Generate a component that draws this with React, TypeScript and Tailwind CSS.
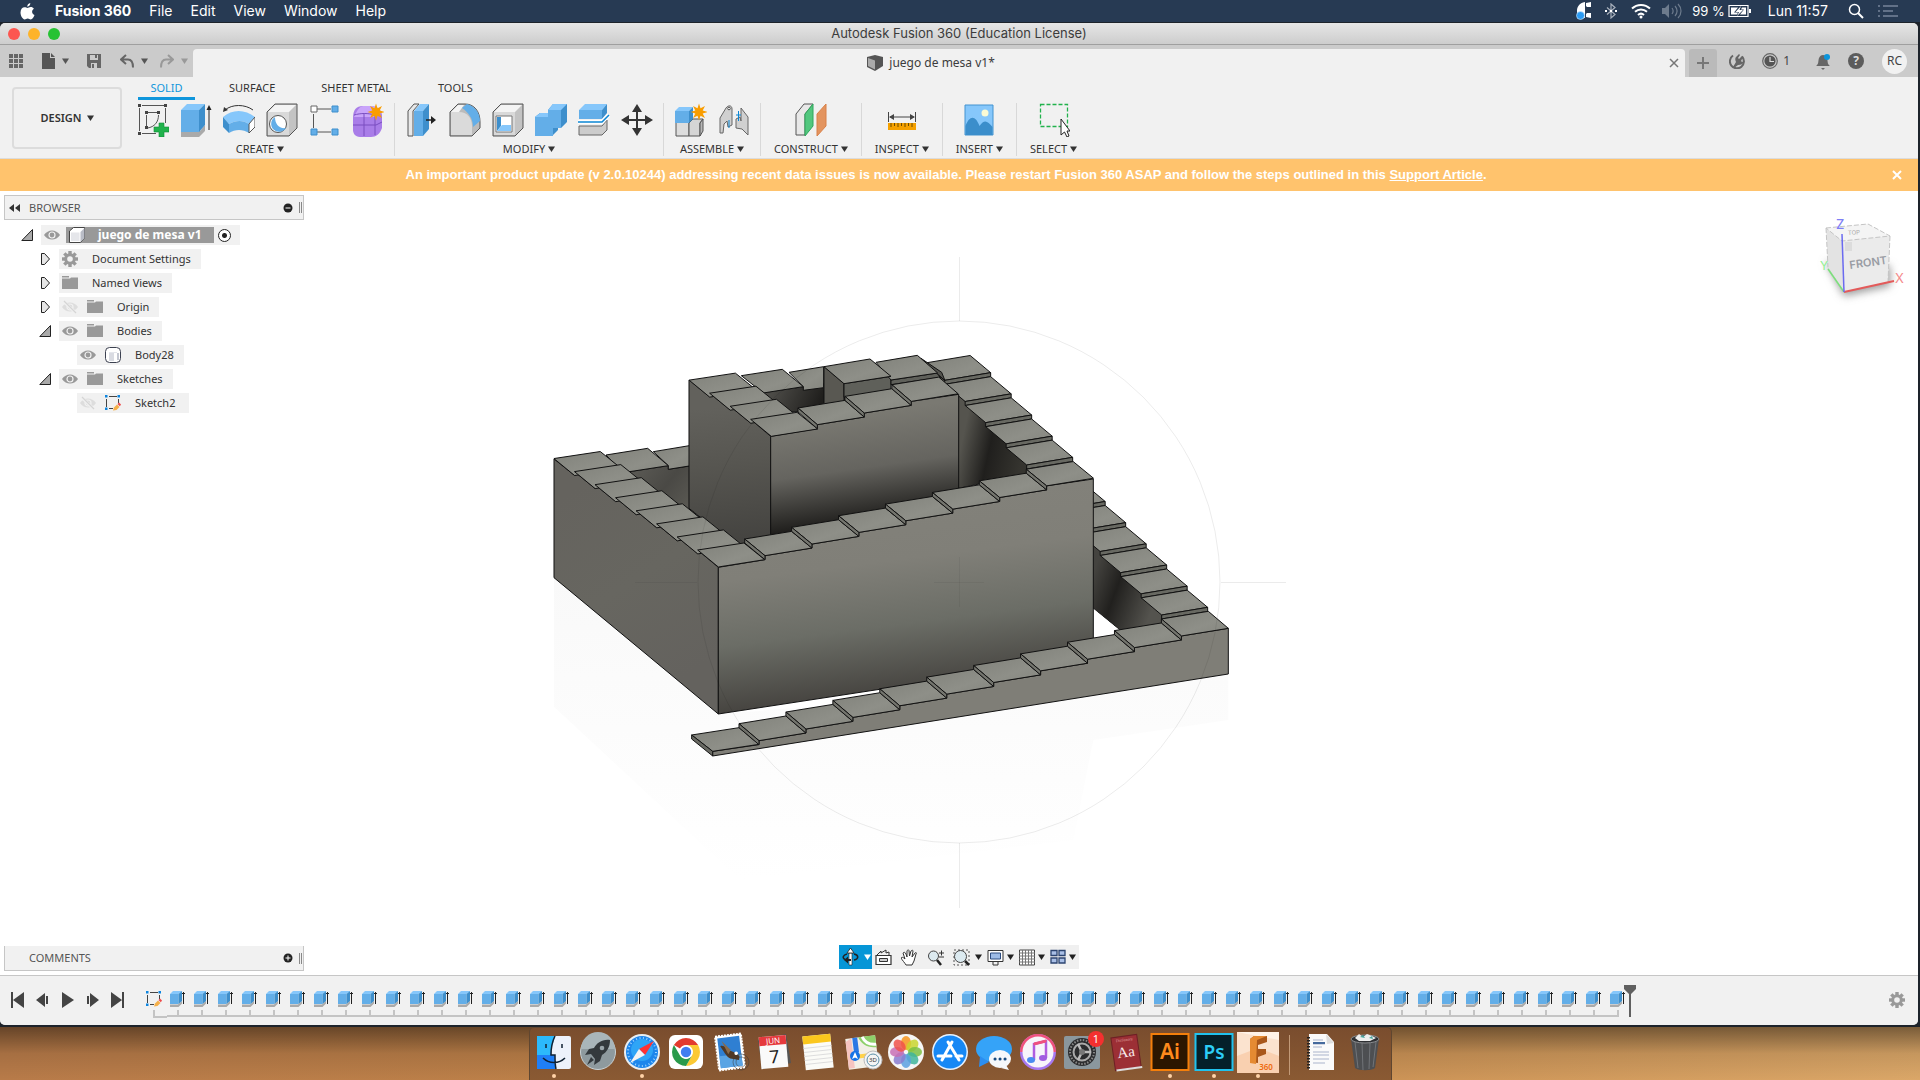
import React from "react";

type P = [number, number];
const pts = (a: P[]) => a.map((p) => p.join(",")).join(" ");

/* ---------- small shared pieces ---------- */

function Caret({ className = "" }: { className?: string }) {
  return (
    <svg className={className} width="7" height="6" viewBox="0 0 7 6">
      <path d="M0 0.5h7L3.500 6z" fill="currentColor" />
    </svg>
  );
}

function Svg({ w = 32, h = 34, children }: { w?: number; h?: number; children: React.ReactNode }) {
  return (
    <svg width={w} height={h} viewBox={`0 0 ${w} ${h}`} fill="none" className="block shrink-0">
      {children}
    </svg>
  );
}

function Star({ x, y }: { x: number; y: number }) {
  const p: P[] = [];
  for (let i = 0; i < 16; i++) {
    const r = i % 2 ? 4 : 8.5;
    const a = (i * Math.PI) / 8;
    p.push([x + r * Math.sin(a), y - r * Math.cos(a)]);
  }
  return <polygon points={pts(p)} fill="#f99d00" />;
}

function GearShape({ c, s = 1, fill = "#999" }: { c: number; s?: number; fill?: string }) {
  return (
    <g fill={fill} transform={`translate(${c} ${c}) scale(${s})`}>
      {[0, 45, 90, 135].map((a) => (
        <rect key={a} x="-1.700" y="-8" width="3.400" height="16" transform={`rotate(${a})`} />
      ))}
      <circle r="5.800" />
      <circle r="2.800" fill="#f1f1f1" />
    </g>
  );
}

/* ---------- ribbon icons ---------- */

const SketchIcon = () => (
  <Svg>
    <path d="M5 2.500h22M2.500 5v23M28.500 5v15M5 30.500h14" stroke="#555" />
    <path d="M11 9.500h10M9.500 12v12M21.500 12c0 7-4 12-11 13" stroke="#555" />
    <path d="M1 1h3v3H1zM27 1h3v3h-3zM1 29h3v3H1zM8 8h3v3H8zM20 8h3v3h-3zM8 23h3v3H8z" fill="#444" />
    <path d="M22 20h5v4h5v5h-5v5h-5v-5h-5v-5h5z" fill="#21b24c" stroke="#0f8f38" strokeWidth=".6" />
  </Svg>
);
const ExtrudeIcon = () => (
  <Svg>
    <path d="M1 28l5 0h14l5-6v6l-6 6H1z" fill="#aaa" />
    <path d="M1 7h18v22H1z" fill="#63aee8" />
    <path d="M1 7l6-6h18l-6 6z" fill="#86c7fb" />
    <path d="M19 7l6-6v21l-6 7z" fill="#3e8fcc" />
    <path d="M29 5v22" stroke="#222" />
    <path d="M26.500 7L29 2l2.500 5z" fill="#222" />
  </Svg>
);
const RevolveIcon = () => (
  <Svg>
    <path d="M2 7C9 1 22 1 30 7" stroke="#333" />
    <path d="M0 9l1-5 4 3z" fill="#333" />
    <path d="M0 14C9 6 22 6 32 14l-6 7c-6-4-13-4-20 0z" fill="#86c7fb" />
    <path d="M6 21c7-4 14-4 20 0v9c-6-4-14-4-20 0z" fill="#63aee8" />
    <path d="M0 14l6 7v9l-6-6z" fill="#3e8fcc" />
    <path d="M26 21l6-7v10l-6 6z" fill="#fff" stroke="#555" />
  </Svg>
);
const HoleIcon = () => (
  <Svg>
    <path d="M1 9l8-8h22v24l-8 8H1z" fill="#c3c3c3" stroke="#555" />
    <path d="M2 9h21v23H2z" fill="#d9d9d9" />
    <path d="M2 9l7-7h21l-7 7z" fill="#f4f4f4" />
    <circle cx="12" cy="21" r="8.500" fill="#fff" stroke="#555" />
    <path d="M9 14a8 8 0 1 0 11 11c-7 1-11-4-11-11z" fill="#63aee8" />
  </Svg>
);
const PatternIcon = () => (
  <Svg>
    <path d="M8 6h14M4.500 11v14M8 29h14" stroke="#555" />
    <path d="M2 3h6v6H2z" fill="#fff" stroke="#666" />
    <path d="M23 3h6v6h-6zM2 26h6v6H2zM23 26h6v6h-6z" fill="#63aee8" stroke="#3e8fcc" />
  </Svg>
);
const FormIcon = () => (
  <Svg>
    <path d="M1 15c0-8 3-12 10-12h8c6 0 11 4 11 10v12c-2 6-6 9-11 9H8c-5 0-7-4-7-7z" fill="#a97de8" />
    <path d="M4 10c3-6 5-7 9-7h6c5 0 8 3 10 7l-6 4H2z" fill="#c9a4fa" />
    <path d="M1 22h23l6-3M12 10v23M2 12c7-2 14-2 21 0v20" stroke="#7a4fc0" />
    <Star x={24} y={9} />
  </Svg>
);
const PressPullIcon = () => (
  <Svg>
    <path d="M2 8l6-7h5L7 8v25H2z" fill="#e8e8e8" stroke="#555" />
    <path d="M8 8h9v25H8z" fill="#63aee8" />
    <path d="M8 8l6-7h9l-6 7z" fill="#86c7fb" />
    <path d="M17 8l6-7v25l-6 7z" fill="#3e8fcc" />
    <path d="M20 17h7" stroke="#222" strokeWidth="1.500" />
    <path d="M25 13l5 4-5 4z" fill="#222" />
  </Svg>
);
const FilletIcon = () => (
  <Svg>
    <path d="M1 9l8-8h7c9 0 15 7 15 18v6l-8 8H1z" fill="#bbb" stroke="#555" />
    <path d="M2 9h8c8 0 13 6 13 14v9H2z" fill="#dadada" />
    <path d="M2 9l7-7h6l-5 7z" fill="#f4f4f4" />
    <path d="M13 5l5-4c8 2 13 9 13 17l-7 6c0-9-5-15-11-19z" fill="#63aee8" />
  </Svg>
);
const ShellIcon = () => (
  <Svg>
    <path d="M1 9l8-8h22v24l-8 8H1z" fill="#c3c3c3" stroke="#555" />
    <path d="M2 9h21v23H2z" fill="#d9d9d9" />
    <path d="M2 9l7-7h21l-7 7z" fill="#f4f4f4" />
    <path d="M4 13h16v16H4z" fill="#fff" stroke="#777" />
    <path d="M5 14h4v9l-4 5z" fill="#3e8fcc" />
    <path d="M5 14h4v8h-1l-3 4z" fill="#3e8fcc" />
    <path d="M10 22h9v6H5z" fill="#86c7fb" />
  </Svg>
);
const CombineIcon = () => (
  <Svg>
    <path d="M0 14l5-4h8v-3l5-6h14v18l-6 6h-3v2l-6 6H0z" fill="#3e8fcc" />
    <path d="M13 7l5-6h14l-6 6zM0 14l5-4h8v4z" fill="#86c7fb" />
    <path d="M13 7h13v18h-8v8H0V14h13z" fill="#63aee8" />
  </Svg>
);
const SplitIcon = () => (
  <Svg>
    <path d="M1 23h23l5-6v10l-5 5H1z" fill="#ccc" stroke="#666" />
    <path d="M1 7l6-6h22l-5 6z" fill="#86c7fb" />
    <path d="M1 7h23v9H1z" fill="#63aee8" />
    <path d="M24 7l5-6v9l-5 6z" fill="#3e8fcc" />
    <path d="M0 19h24l7-7" stroke="#fff" strokeWidth="4" />
    <path d="M0 19h24l7-7" stroke="#0b86d4" strokeWidth="1.500" />
  </Svg>
);
const MoveIcon = () => (
  <Svg>
    <path d="M16 5v24M4 17h24" stroke="#333" strokeWidth="2" />
    <path d="M16 1l5 8H11zM16 33l5-8H11zM0 17l8-5v10zM32 17l-8-5v10z" fill="#333" />
  </Svg>
);
const ComponentIcon = () => (
  <Svg>
    <path d="M1 19h13v14H1z" fill="#ddd" stroke="#555" />
    <path d="M14 20l4-4h10l-3 4v13H14z" fill="#d5d5d5" stroke="#555" />
    <path d="M25 20l3-4v12l-3 5z" fill="#b7b7b7" stroke="#555" />
    <path d="M0 8h14v12H0z" fill="#63aee8" />
    <path d="M0 8l4-4h14l-4 4z" fill="#86c7fb" />
    <path d="M14 8l4-4v12l-4 4z" fill="#3e8fcc" />
    <Star x={24} y={9} />
  </Svg>
);
const JointIcon = () => (
  <Svg>
    <path d="M2 30V15L8 5c2-3 6-3 6 1v16l-4 2-1-6-3 3-1 9z" fill="#d0d0d0" stroke="#666" />
    <circle cx="11" cy="5.500" r="1.300" fill="#fff" stroke="#555" />
    <path d="M11 17v8" stroke="#0b86d4" />
    <path d="M18 16l4-2 1 4V5l7 9v18l-6-6-6-1z" fill="#d0d0d0" stroke="#666" />
    <path d="M20.500 8v10M18 12h5" stroke="#0b86d4" />
  </Svg>
);
const PlaneIcon = () => (
  <Svg>
    <path d="M1 11L9 1h9L10 11v21H1z" fill="#e8e8e8" stroke="#555" />
    <path d="M10 11l8-10v22l-8 10z" fill="#52c77e" stroke="#2fa75c" />
    <path d="M22 11l9-10v22l-9 10z" fill="#e3945f" stroke="#d98048" />
  </Svg>
);
const MeasureIcon = () => (
  <Svg>
    <path d="M2.500 9v10M29.500 9v10M4 14h24" stroke="#444" />
    <path d="M3 14l5-3v6zM29 14l-5-3v6z" fill="#444" />
    <path d="M2 20h28v7H2z" fill="#f5a100" />
    <path d="M5 20v4M8.500 20v3M12 20v4M15.500 20v3M19 20v4M22.500 20v3M26 20v4" stroke="#6b4a00" />
  </Svg>
);
const InsertIcon = () => (
  <Svg>
    <path d="M2 2h28v30H2z" fill="#86c7fb" stroke="#4393d0" />
    <path d="M2.500 23c4-11 10-11 14 0 5-7 8-5 13 1v8h-27z" fill="#3b8ecb" />
    <circle cx="22" cy="10" r="3.500" fill="#fbfbd5" />
  </Svg>
);
const SelectIcon = () => (
  <Svg>
    <path d="M2.500 1.500h27v22h-27z" stroke="#21b24c" strokeWidth="1.300" strokeDasharray="4 2" />
    <path d="M23 16v16l3.500-3 2.500 5 2-1-2-5h3z" fill="#fff" stroke="#222" />
  </Svg>
);

const groups: { label: string; icons: [string, () => React.JSX.Element][] }[] = [
  { label: "CREATE", icons: [["Sketch", SketchIcon], ["Extrude", ExtrudeIcon], ["Revolve", RevolveIcon], ["Hole", HoleIcon], ["Pattern", PatternIcon], ["Form", FormIcon]] },
  { label: "MODIFY", icons: [["Press Pull", PressPullIcon], ["Fillet", FilletIcon], ["Shell", ShellIcon], ["Combine", CombineIcon], ["Split", SplitIcon], ["Move", MoveIcon]] },
  { label: "ASSEMBLE", icons: [["Component", ComponentIcon], ["Joint", JointIcon]] },
  { label: "CONSTRUCT", icons: [["Plane", PlaneIcon]] },
  { label: "INSPECT", icons: [["Measure", MeasureIcon]] },
  { label: "INSERT", icons: [["Image", InsertIcon]] },
  { label: "SELECT", icons: [["Select", SelectIcon]] },
];

/* ---------- system menu bar ---------- */

function MenuBar() {
  return (
    <header className="flex h-[22px] shrink-0 items-center bg-[#273a53] pl-[20px] pr-[22px] font-['Inter',sans-serif] text-[14px] leading-[22px] text-white">
      <button aria-label="Apple" className="mr-[20px]">
        <svg width="15" height="17" viewBox="0 0 15 17" fill="#fff">
          <path d="M10.300 0c.2 1.600-1.200 3.600-3 3.700C7 2.100 8.600.2 10.300 0zM7.500 5c.8 0 1.700-.9 3.200-.9 1.300 0 2.500.7 3.200 1.700-2.700 1.700-2.200 5.100.6 6.200-.6 1.900-2.200 4.400-3.800 4.400-1.200 0-1.600-.8-3-.8s-1.900.8-3 .8C2.700 16.400.500 12.800.500 9.500c0-3.300 2-5.200 4-5.200 1.400 0 2.200.7 3 .7z" />
        </svg>
      </button>
      <nav className="flex gap-[18px]">
        <button className="font-bold">Fusion 360</button>
        {["File", "Edit", "View", "Window", "Help"].map((m) => (
          <button key={m}>{m}</button>
        ))}
      </nav>
      <div className="ml-auto flex items-center">
        <Svg w={16} h={18}>
          <path d="M15 0v5h-4l-1-1V1zM9 0v16C3 16 1 13 1 9s2-8 8-9zM11 11h4v5l-5-1v-3z" fill="#fff" />
          <circle cx="4.500" cy="13.500" r="4" fill="#2b9bf4" stroke="#d9ecfc" strokeWidth=".6" />
        </Svg>
        <span className="ml-[13px]" />
        <Svg w={12} h={16}>
          <path d="M2 4.500l8 7L6 15V1l4 3.500-8 7" stroke="#a9b1bc" strokeWidth="1.200" />
          <path d="M0 8h2M5 8h2M10 8h2" stroke="#fff" strokeWidth="2" />
        </Svg>
        <span className="ml-[14px]" />
        <Svg w={20} h={16}>
          <path d="M1 5.500a13 13 0 0 1 18 0M4 8.800a9 9 0 0 1 12 0M7 12a4.500 4.500 0 0 1 6 0" stroke="#fff" strokeWidth="2" />
          <circle cx="10" cy="14" r="1.500" fill="#fff" />
        </Svg>
        <span className="ml-[11px]" />
        <Svg w={20} h={16}>
          <path d="M0 5h3l4-4v14l-4-4H0z" fill="#6d7b8d" />
          <path d="M10 5c1.500 2 1.500 4 0 6M13 3c2.500 3 2.500 7 0 10M16 1c4 4 4 10 0 14" stroke="#6d7b8d" strokeWidth="1.200" />
        </Svg>
        <span className="ml-[10px] text-[13px] whitespace-nowrap">99 %</span>
        <span className="ml-[3px]" />
        <Svg w={24} h={14}>
          <path d="M1 1.500h19v11H1z" stroke="#fff" strokeWidth="1.200" />
          <path d="M3 3.500h7L6 8.500h4l-1 2H3zM12 10.500l4-5h-3l1-2h4v7z" fill="#fff" />
          <path d="M13 2L7.500 8h3.500l-2 4 6-6h-3.500z" fill="#fff" />
          <path d="M22 5v4" stroke="#fff" strokeWidth="2" />
        </Svg>
        <span className="ml-[16px] whitespace-nowrap">Lun 11:57</span>
        <button aria-label="Search" className="ml-[20px]">
          <Svg w={16} h={16}>
            <circle cx="6.500" cy="6.500" r="5" stroke="#fff" strokeWidth="1.500" />
            <path d="M10 10l5 5" stroke="#fff" strokeWidth="2" />
          </Svg>
        </button>
        <button aria-label="Notifications" className="ml-[14px]">
          <Svg w={20} h={14}>
            <path d="M0 2h2M5 2h15M0 7h2M5 7h10M0 12h2M5 12h15" stroke="#77849a" strokeWidth="1.500" />
          </Svg>
        </button>
      </div>
    </header>
  );
}

/* ---------- window chrome ---------- */

function TitleBar() {
  return (
    <div className="grid h-[22px] shrink-0 grid-cols-[1fr_auto_1fr] items-center rounded-t-[5px] border-b border-[#9f9f9f] bg-linear-to-b from-[#e6e6e6] to-[#cdcdcd] px-2">
      <div className="flex gap-2">
        <button aria-label="Close window" className="size-3 rounded-full bg-[#fc5650]" />
        <button aria-label="Minimize window" className="size-3 rounded-full bg-[#fdb32a]" />
        <button aria-label="Zoom window" className="size-3 rounded-full bg-[#27c234]" />
      </div>
      <h1 className="font-['Inter',sans-serif] text-[13px] leading-[21px] text-[#3c3c3c]">Autodesk Fusion 360 (Education License)</h1>
    </div>
  );
}

function TabStrip() {
  return (
    <div className="flex h-[32px] shrink-0 items-end bg-[#cbcbcb] font-['Noto_Sans',sans-serif]">
      <div className="flex h-full w-[193px] shrink-0 items-center pl-[9px] text-[#555]">
        <button aria-label="Data panel">
          <Svg w={14} h={14}>
            <path d="M0 0h4v4H0zM5 0h4v4H5zM10 0h4v4h-4zM0 5h4v4H0zM5 5h4v4H5zM10 5h4v4h-4zM0 10h4v4H0zM5 10h4v4H5zM10 10h4v4h-4z" fill="#666" />
          </Svg>
        </button>
        <button aria-label="File" className="ml-[19px] flex items-center gap-[6px]">
          <Svg w={14} h={16}><path d="M0 0h8v5h5v11H0z M9 0l4 4H9z" fill="#555" /></Svg>
          <Caret />
        </button>
        <button aria-label="Save" className="ml-[18px]">
          <Svg w={14} h={14}>
            <path d="M0 0h14v14H2l-2-2z" fill="#666" />
            <path d="M3 1h8v5H3zM4 9h6v5H4z" fill="#cbcbcb" />
            <path d="M8 1h2v3H8zM5 10h2v4H5z" fill="#666" />
          </Svg>
        </button>
        <button aria-label="Undo" className="ml-[19px] flex items-center gap-[7px]">
          <Svg w={14} h={14}><path d="M6 1L1 5.500 6 10M2 5.500h6c4 0 5 3 5 8" stroke="#666" strokeWidth="2" /></Svg>
          <Caret />
        </button>
        <button aria-label="Redo" className="ml-[12px] flex items-center gap-[7px] text-[#999]">
          <Svg w={14} h={14}><path d="M8 1l5 4.500L8 10M12 5.500H6c-4 0-5 3-5 8" stroke="#999" strokeWidth="2" /></Svg>
          <Caret />
        </button>
      </div>
      <div className="flex h-[28px] min-w-0 flex-1 items-center rounded-t-[4px] bg-[#f1f1f1] pr-[6px]">
        <div className="flex flex-1 items-center justify-center gap-[6px] text-[12px] text-[#3c3c3c]">
          <Svg w={16} h={16}>
            <path d="M0 2l8-2 8 2v9l-8 5-8-4z" fill="#555" />
            <path d="M1 3l7 2.500v9L1 11z" fill="#aaa" />
          </Svg>
          juego de mesa v1*
        </div>
        <button aria-label="Close tab">
          <Svg w={10} h={10}><path d="M1 1l8 8M9 1L1 9" stroke="#777" strokeWidth="1.500" /></Svg>
        </button>
      </div>
      <button aria-label="New tab" className="ml-[4px] flex h-[28px] w-[28px] items-center justify-center rounded-t-[3px] bg-[#bababa]">
        <Svg w={14} h={14}><path d="M7 1v12M1 7h12" stroke="#777" strokeWidth="2" /></Svg>
      </button>
      <div className="flex h-[32px] shrink-0 items-center pr-[11px] pl-[12px] text-[12px] text-[#444]">
        <button aria-label="Extensions">
          <Svg w={16} h={16}>
            <path d="M4 2.500a7 7 0 1 0 9 1" stroke="#666" strokeWidth="2" />
            <path d="M4 14l3-5c-1-2-1-4 0-5l3-3 1 1-2 3 1 1 3-3 1 1-2 4 1 1 2-1v1c-1 2-3 3-6 3l-4 3z" fill="#666" />
          </Svg>
        </button>
        <button className="ml-[17px] flex items-center gap-[5px]">
          <Svg w={16} h={16}>
            <circle cx="8" cy="8" r="7.300" stroke="#666" strokeWidth="1.200" />
            <circle cx="8" cy="8" r="5.600" fill="#555" />
            <path d="M8 4v4.500h4" stroke="#ddd" strokeWidth="1.200" />
          </Svg>
          1
        </button>
        <button aria-label="Notifications" className="ml-[25px]">
          <Svg w={16} h={17}>
            <path d="M1 13c3-2 2-5 3-8 1-2 2-3 4-3s3 1 4 3c1 3 0 6 3 8zM6 15h4l-2 2z" fill="#666" />
            <circle cx="12" cy="4" r="3" fill="#0b95dc" />
          </Svg>
        </button>
        <button aria-label="Help" className="ml-[17px] size-4 rounded-full bg-[#5c5c5c] text-[12px] leading-4 font-bold text-[#ddd]">?</button>
        <button className="ml-[18px] size-[25px] rounded-full bg-[#f1f1f1] text-center text-[12px]">RC</button>
      </div>
    </div>
  );
}

function Ribbon() {
  return (
    <div className="flex h-[82px] shrink-0 border-b border-[#dcdcdc] bg-[#f1f1f1] font-['Noto_Sans',sans-serif] text-[11px] leading-[14px] text-[#333]">
      <button className="mt-[10px] ml-[12px] flex h-[62px] w-[110px] shrink-0 items-center justify-center gap-[5px] rounded-[4px] border-2 border-[#dcdcdc] font-semibold">
        DESIGN <Caret />
      </button>
      <div className="ml-[4px]">
        <div className="flex h-[23px] pl-[12px]">
          <button className="mr-[34px] flex w-[57px] flex-col items-center border-b-[3px] border-[#0f96dc] pt-[4px] text-[#0f96dc]">SOLID</button>
          <button className="mr-[46px] flex pt-[4px]">SURFACE</button>
          <button className="mr-[47px] flex pt-[4px]">SHEET METAL</button>
          <button className="flex pt-[4px]">TOOLS</button>
        </div>
        <div className="mt-[3px] flex divide-x divide-[#d8d8d8]">
          {groups.map((g) => (
            <div key={g.label} className={g.icons.length > 1 ? "px-[5px]" : "px-[13px]"}>
              <div className="flex justify-center">
                {g.icons.map(([n, I]) => (
                  <button key={n} aria-label={n} className="flex w-[43px] justify-center"><I /></button>
                ))}
              </div>
              <button className="mx-auto flex items-center gap-[3px] pt-[5px]">{g.label}<Caret /></button>
            </div>
          ))}
        </div>
      </div>
    </div>
  );
}

/* ---------- browser tree ---------- */

const Eye = ({ off }: { off?: boolean }) => (
  <Svg w={16} h={16}>
    <path d="M0 8c4-6 12-6 16 0-4 6-12 6-16 0z" fill={off ? "#ddd" : "#999"} />
    <circle cx="8" cy="8" r="3" fill={off ? "#ddd" : "#999"} stroke="#f1f1f1" strokeWidth="1.200" />
    {off && <path d="M1 2l13 12" stroke="#f1f1f1" strokeWidth="3" />}
    {off && <path d="M2 2l12 12" stroke="#d5d5d5" strokeWidth="1.200" />}
  </Svg>
);
const Folder = () => (
  <Svg w={16} h={16}><path d="M0 1h7v1.500H0zM0 3.500h8l1-1h7V14H0z" fill="#999" /></Svg>
);
const Cube = () => (
  <Svg w={16} h={16}>
    <path d="M.5 4l4-3.500h11V11l-4 4.500H.5z" fill="#fff" stroke="#444" />
    <path d="M2 5.500h8.500V14H2z" fill="#e5e6ea" />
    <path d="M11.500 5l4-4v10l-4 4z" fill="#b9bcc6" />
  </Svg>
);
const Cylinder = () => (
  <Svg w={16} h={16}>
    <rect x=".5" y=".5" width="15" height="15" rx="4" fill="#fff" stroke="#3c4150" />
    <path d="M4 6h5v8H4z" fill="#d9dbe2" /><path d="M12 6h2v7h-2z" fill="#c4c7d1" /><path d="M4 5.500h8" stroke="#e4e6ec" />
  </Svg>
);
const SketchGlyph = () => (
  <>
    <path d="M4 1.500h8M1.500 4v8M13.500 4v4M4 13.500h4" stroke="#444" />
    <path d="M0 0h2.500v2.500H0zM12.500 0H15v2.500h-2.500zM0 12.500h2.500V15H0z" fill="#0f86e0" />
    <path d="M8 15.500l1-3 3-3 2.500 2.500-3 3z" fill="#f5b04a" />
    <path d="M12.500 9l1.500-1.500 2 2L14.800 11.300z" fill="#ee4a4a" />
  </>
);
const SketchSmall = () => <Svg w={16} h={16}><SketchGlyph /></Svg>;
const GearSmall = () => <Svg w={16} h={16}><GearShape c={8} /></Svg>;

const Expander = ({ open }: { open?: boolean }) => (
  <button aria-label={open ? "Collapse" : "Expand"} className="block">
    <Svg w={12} h={14}>
      {open ? <path d="M.8 12.500L11.500 1.500v11z" fill="#aaa" stroke="#222" /> : <path d="M2.500 1.500l3 0 5 5.500-5 5.500H2.500z" fill="#e6e6e6" stroke="#222" />}
    </Svg>
  </button>
);

type Row = { label: string; pad: string; exp?: "open" | "shut"; eye?: "on" | "off"; Icon: () => React.JSX.Element; end: string };
const rows: Row[] = [
  { label: "Document Settings", pad: "pl-[39px]", exp: "shut", Icon: GearSmall, end: "pr-[10px]" },
  { label: "Named Views", pad: "pl-[39px]", exp: "shut", Icon: Folder, end: "pr-[10px]" },
  { label: "Origin", pad: "pl-[39px]", exp: "shut", eye: "off", Icon: Folder, end: "pr-[10px]" },
  { label: "Bodies", pad: "pl-[39px]", exp: "open", eye: "on", Icon: Folder, end: "pr-[10px]" },
  { label: "Body28", pad: "pl-[77px]", eye: "on", Icon: Cylinder, end: "pr-[10px]" },
  { label: "Sketches", pad: "pl-[39px]", exp: "open", eye: "on", Icon: Folder, end: "pr-[10px]" },
  { label: "Sketch2", pad: "pl-[77px]", eye: "off", Icon: SketchSmall, end: "pr-[14px]" },
];

function PanelHeader({ title, plus }: { title: string; plus?: boolean }) {
  return (
    <div className={plus ? "flex h-[25px] w-[300px] items-center border border-t-0 border-[#c6c6c6] bg-[#f1f1f1] text-[11px] text-[#555]" : "flex h-[25px] w-[300px] items-center border border-[#c6c6c6] bg-[#f1f1f1] text-[11px] text-[#555]"}>
      <span className="w-[24px] pl-[4px]">
        {!plus && <Svg w={11} h={8}><path d="M5 0v8L0 4zM11 0v8L6 4z" fill="#333" /></Svg>}
      </span>
      {title}
      <button aria-label={plus ? "Expand panel" : "Collapse panel"} className="ml-auto mr-[6px]">
        <Svg w={10} h={10}>
          <circle cx="5" cy="5" r="4.500" fill="#222" />
          <path d={plus ? "M2.500 5h5M5 2.500v5" : "M2.500 5h5"} stroke="#fff" />
        </Svg>
      </button>
      <span className="mr-px h-[11px] w-[3px] border-x border-[#888]" />
    </div>
  );
}

function Browser() {
  return (
    <aside className="absolute top-[4px] left-[4px] font-['Noto_Sans',sans-serif] text-[11px] leading-5 text-[#333]">
      <PanelHeader title="BROWSER" />
      <ul className="mt-[5px] -ml-1 flex flex-col gap-[4px]">
        <li className="flex items-center pl-[21px]">
          <Expander open />
          <div className="ml-[8px] flex h-5 items-center bg-[#f1f1f1] pr-[9px] pl-[3px]">
            <Eye />
            <div className="ml-[6px] flex h-4 items-center bg-[#999] pr-[12px] pl-[3px] text-[12px] font-bold text-white">
              <Cube /><span className="ml-[13px]">juego de mesa v1</span>
            </div>
            <input type="radio" defaultChecked aria-label="Activate component" className="ml-[4px] size-[13px] appearance-none rounded-full border border-[#222] bg-[radial-gradient(circle,#222_0_2px,#fff_3px)]" />
          </div>
        </li>
        {rows.map((r) => (
          <li key={r.label} className={`flex h-5 items-center ${r.pad}`}>
            {r.exp && <span className="mr-[8px]"><Expander open={r.exp === "open"} /></span>}
            <div className={`flex h-5 items-center bg-[#f1f1f1] pl-[3px] ${r.end}`}>
              {r.eye && <span className="mr-[9px]"><Eye off={r.eye === "off"} /></span>}
              <r.Icon />
              <span className="ml-[14px]">{r.label}</span>
            </div>
          </li>
        ))}
      </ul>
    </aside>
  );
}

/* ---------- 3D model ---------- */

const TOP = "url(#top)";

/* rising tiles along a front edge; the last one is the corner tile */
function FrontRow({ bl, fl, n }: { bl: P; fl: P; n: number }) {
  const dx = 140.8, dy = -34.9;
  return (
    <>
      {Array.from({ length: n }, (_, i) => {
        const b: P = [bl[0] + dx * i, bl[1] + dy * i];
        const f: P = [fl[0] + dx * i, fl[1] + dy * i];
        return (
          <g key={i}>
            <polygon fill={TOP} points={pts([b, [b[0] + dx, b[1] + dy + 12], [f[0] + dx, f[1] + dy + 12], f])} />
            <polygon fill="#74756e" points={pts([b, f, [f[0], f[1] + 12], [b[0], b[1] + 12]])} />
          </g>
        );
      })}
    </>
  );
}
/* tiles going back and up to the left, descending away from the viewer */
function LeftRow({ x, y, n }: { x: number; y: number; n: number }) {
  return (
    <>
      {Array.from({ length: n }, (_, j) => {
        const k = n - 1 - j;
        const bx = x - 61.6 * k, by = y - 39.2 * k;
        return <polygon key={k} fill={TOP} points={pts([[bx, by], [bx + 139, by - 21], [bx + 201, by + 29], [bx + 62, by + 51]])} />;
      })}
    </>
  );
}
/* tiles of a right-hand flight, with the riser facing the viewer */
function RightRow({ fl, fr, n }: { fl: P; fr: P; n: number }) {
  return (
    <>
      {Array.from({ length: n }, (_, i) => {
        const k = n - 1 - i;
        const l: P = [fl[0] - 61.5 * k, fl[1] - 63.5 * k];
        const r: P = [fr[0] - 61.5 * k, fr[1] - 63.5 * k];
        return (
          <g key={k}>
            <polygon fill={TOP} points={pts([[l[0] - 61.5, l[1] - 51.5], [r[0] - 61.5, r[1] - 51.5], r, l])} />
            <polygon fill="#686962" points={pts([l, r, [r[0], r[1] + 12], [l[0], l[1] + 12]])} />
          </g>
        );
      })}
    </>
  );
}

function stairs(start: P, n: number): P[] {
  const out: P[] = [];
  for (let i = 0; i < n; i++) {
    const x = start[0] + 140.8 * i, y = start[1] - 34.9 * i;
    out.push([x, y + 12], [x, y]);
  }
  return out;
}
function leftNotches(x: number, y: number, n: number): P[] {
  const out: P[] = [];
  for (let k = 0; k < n; k++) out.push([x - 61.6 * k, y - 39.2 * k], [x - 61.6 * k, y - 39.2 * k + 11]);
  return out;
}

function Model() {
  return (
    <svg className="absolute inset-0 h-full w-full" viewBox="0 191 1918 784" preserveAspectRatio="xMidYMid meet">
      <defs>
        <linearGradient id="top" x1="0" y1="0" x2="1" y2="1">
          <stop offset="0" stopColor="#81827b" /><stop offset=".6" stopColor="#8e8f88" /><stop offset="1" stopColor="#85867f" />
        </linearGradient>
        <linearGradient id="front" gradientUnits="userSpaceOnUse" x1="1000" y1="500" x2="1070" y2="1050">
          <stop offset="0" stopColor="#82817a" /><stop offset=".3" stopColor="#807f78" /><stop offset=".65" stopColor="#6b6d66" /><stop offset="1" stopColor="#474541" />
        </linearGradient>
        <linearGradient id="side" gradientUnits="userSpaceOnUse" x1="100" y1="450" x2="450" y2="1000">
          <stop offset="0" stopColor="#65635e" /><stop offset=".5" stopColor="#676660" /><stop offset="1" stopColor="#64625e" />
        </linearGradient>
        <linearGradient id="towerFront" gradientUnits="userSpaceOnUse" x1="900" y1="230" x2="945" y2="550">
          <stop offset="0" stopColor="#7a7972" /><stop offset=".5" stopColor="#65645f" /><stop offset="1" stopColor="#1e1d1b" />
        </linearGradient>
        <linearGradient id="towerSide" gradientUnits="userSpaceOnUse" x1="560" y1="200" x2="600" y2="620">
          <stop offset="0" stopColor="#62615c" /><stop offset=".4" stopColor="#575651" /><stop offset="1" stopColor="#43423f" />
        </linearGradient>
        <linearGradient id="dark1" gradientUnits="userSpaceOnUse" x1="1256" y1="350" x2="1440" y2="390">
          <stop offset="0" stopColor="#55544e" /><stop offset=".45" stopColor="#201f1d" /><stop offset="1" stopColor="#35342f" />
        </linearGradient>
        <linearGradient id="dark2" gradientUnits="userSpaceOnUse" x1="1660" y1="700" x2="1850" y2="770">
          <stop offset="0" stopColor="#44433f" /><stop offset=".4" stopColor="#21201e" /><stop offset="1" stopColor="#54534e" />
        </linearGradient>
        <linearGradient id="dark3" gradientUnits="userSpaceOnUse" x1="300" y1="380" x2="450" y2="500">
          <stop offset="0" stopColor="#595853" /><stop offset=".5" stopColor="#4a4945" /><stop offset="1" stopColor="#5a5953" />
        </linearGradient>
        <linearGradient id="dark4" gradientUnits="userSpaceOnUse" x1="700" y1="150" x2="830" y2="210">
          <stop offset="0" stopColor="#4c4b47" /><stop offset="1" stopColor="#1f1e1c" />
        </linearGradient>
        <linearGradient id="floor" x1="0" y1="0" x2="0" y2="1">
          <stop offset="0" stopColor="#f9f9f9" /><stop offset="1" stopColor="#fff" />
        </linearGradient>
      </defs>

      <g transform="translate(540 340) scale(.33333)" strokeLinejoin="round">
        <path d="M42 713L535 1122 2065 1002V1140L1660 1200 1600 1500 600 1620 42 1100z" fill="url(#floor)" />
        <g stroke="#111" strokeWidth="3">
          {/* outer right flight */}
          <polygon fill="url(#dark2)" points="1600,520 1680,595 1865,787 1865,852 1740,870 1660,805 1600,760" />
          <RightRow fl={[1865, 825]} fr={[2003, 802]} n={7} />
          {/* upper right flight */}
          <polygon fill="url(#dark1)" points="1200,90 1213,120 1460,375 1460,402 1256,445 1200,445" />
          <RightRow fl={[1460, 375]} fr={[1598, 352]} n={5} />
          {/* back of the main block */}
          <polygon fill="url(#dark3)" points="260,396 385,377 385,388 460,376 460,520 640,620 560,620" />
          <polygon fill={TOP} points="340,335 460,315 460,376 385,388 385,377" />
          <polygon fill={TOP} points="198,345 323,325 385,377 250,398" />
          {/* tower */}
          <polygon fill="url(#towerSide)" points={pts([[447, 120], ...leftNotches(632, 238, 3).reverse(), [692, 289], [692, 620], [600, 625], [447, 505]])} />
          <polygon fill="url(#towerFront)" points={pts([[692, 289], ...stairs([832, 254], 3), [1256, 163], [1256, 480], [692, 620]])} />
          <polygon fill="url(#dark4)" points="670,158 790,140 851,131 920,131 920,190 775,216 740,216" />
          <polygon fill={TOP} points="747,97 851,80 851,143 790,151 790,140" />
          <polygon fill={TOP} points="604,107 727,88 790,140 670,159" />
          <polygon fill="#595852" points="852,80 912,131 912,185 852,192" />
          <polygon fill="#5f605a" points="912,131 1053,109 1053,150 912,172" />
          <polygon fill="#5f605a" points="1053,120 1193,99 1200,112 1053,134" />
          <polygon fill="#52524d" points="1143,55 1205,97 1215,122 1190,100" />
          <polygon fill={TOP} points="1008,67 1132,46 1193,99 1053,120" />
          <polygon fill={TOP} points="852,80 990,57 1053,109 912,131" />
          <LeftRow x={632} y={238} n={4} />
          <FrontRow bl={[774, 204]} fl={[832, 254]} n={3} />
          {/* main block */}
          <polygon fill="url(#side)" points={pts([[42, 357], ...leftNotches(473, 630, 7).reverse(), [535, 682], [535, 1122], [42, 713]])} />
          <polygon fill="url(#front)" points={pts([[535, 682], ...stairs([675, 647], 7), [1660, 417], [1660, 950], [535, 1122]])} />
          <polygon fill="#fff" stroke="none" points="1662,808 1738,870 1662,890" />
          <LeftRow x={473} y={630} n={8} />
          <FrontRow bl={[614, 597]} fl={[675, 647]} n={7} />
          {/* lower ramp */}
          <polygon fill="#7f7e77" points={pts([[518, 1234], ...stairs([657, 1202], 10), [2065, 865], [2065, 1002], [518, 1248]])} />
          <polygon fill={TOP} points="455,1185 597,1163 657,1213 518,1234" />
          <polygon fill="#686962" points="455,1185 518,1234 518,1248 455,1197" />
          <FrontRow bl={[597, 1151]} fl={[657, 1202]} n={10} />
        </g>
      </g>

      <g fill="none" stroke="#000" strokeOpacity=".08">
        <circle cx="959" cy="582" r="261" />
        <path d="M959.500 257v64M959.500 843v65M1221 582.500h65" />
        <path d="M635 582.500h62M934 582.500h50M959.500 557v50" strokeOpacity=".05" />
      </g>
    </svg>
  );
}

function ViewCube() {
  return (
    <svg className="absolute top-[20px] right-[8px] font-['Inter',sans-serif]" width="100" height="100" viewBox="1808 211 100 100">
      <defs>
        <filter id="soft" x="-30%" y="-30%" width="160%" height="160%"><feGaussianBlur stdDeviation="4" /></filter>
      </defs>
      <path d="M1824 262l18 34 46-10v-20z" fill="#999" filter="url(#soft)" />
      <path d="M1824 228l42-4 22 12-48 5z" fill="#f4f4f4" />
      <path d="M1824 228l16 13 2 51-16-25z" fill="#e3e3e3" />
      <path d="M1840 241l48-5-2 46-44 10z" fill="#ebebeb" />
      <path d="M1824 228l42-4 22 12-48 5zM1824 228l2 39M1888 236l-2 46" fill="none" stroke="#c4c4c4" strokeDasharray="5 2" />
      <path d="M1843 242h7v9h-7z" fill="#dcdcdc" />
      <text x="1846" y="235" fontSize="6" fill="#aaa" transform="rotate(-4 1846 235)">TOP</text>
      <text x="1848" y="269" fontSize="11" fontWeight="600" fill="#999ca3" transform="rotate(-8 1848 269)">FRONT</text>
      <path d="M1842 292l-16-23" stroke="#7be07b" strokeWidth="1.500" />
      <path d="M1842 292l50-11" stroke="#e35a5a" strokeWidth="2" />
      <path d="M1842 292l-2-58" stroke="#6a6af0" strokeWidth="1.500" />
      <text x="1834" y="229" fontSize="13" fill="#7f7ff5" fontWeight="500">Z</text>
      <text x="1818" y="270" fontSize="12" fill="#8ef08e">Y</text>
      <text x="1893" y="283" fontSize="13" fill="#f58a8a">X</text>
    </svg>
  );
}

/* ---------- navigation bar ---------- */

function NavBar() {
  return (
    <div className="absolute bottom-[6px] left-1/2 flex h-6 -translate-x-1/2 items-center bg-[#f0f0f0] text-[#222]">
      <button aria-label="Orbit" className="flex h-6 w-[33px] items-center gap-[5px] bg-[#0696d7] pl-[3px] text-white">
        <Svg w={17} h={18}>
          <path d="M5 6C1 7 0 10 3 11.500M12 6c5 1 5 5 0 6" stroke="#222" strokeWidth="1.500" />
          <path d="M7 5h3v12H7z" fill="#fff" stroke="#222" strokeWidth=".6" /><path d="M8.500 0l3.500 5H5z" fill="#fff" stroke="#222" strokeWidth=".8" />
          <path d="M2 12l4-3.500v2.500h3v2H6v2.500z" fill="#222" />
        </Svg>
        <Caret />
      </button>
      <button aria-label="Look at" className="ml-[3px]">
        <Svg w={17} h={17}>
          <path d="M1 6.500h15v9H1z" fill="#fff" stroke="#333" strokeWidth="1.200" />
          <path d="M2 6L6 2v2l5-3v3l3-1v3" stroke="#333" /><path d="M4.500 9.500h8v3h-8z" fill="#ccc" stroke="#333" />
        </Svg>
      </button>
      <button aria-label="Pan" className="ml-[9px]">
        <Svg w={17} h={17}>
          <path d="M5 16c-1-2-4-5-5-7 1-1 2-1 4 1L2 4c1-1 2-1 3 1l1 3V2c1-2 2-1 2 0l.5 5L10 2c1-1 2-1 2 0l-1 6 3-4c1-1 2 0 1 1l-2 7-2 4z" fill="#fff" stroke="#333" />
        </Svg>
      </button>
      <button aria-label="Zoom" className="ml-[9px]">
        <Svg w={18} h={17}>
          <circle cx="6.500" cy="7" r="5" fill="#dceaf0" stroke="#444" /><path d="M10 11l4 5" stroke="#222" strokeWidth="2.500" />
          <path d="M12 4h5M14.500 1.500v5M12 8h5" stroke="#333" />
        </Svg>
      </button>
      <button aria-label="Fit" className="ml-[8px] flex items-center gap-[5px]">
        <Svg w={17} h={17}>
          <path d="M1 1h15v15H1z" stroke="#555" strokeDasharray="2 2" />
          <circle cx="7.500" cy="7.500" r="6" fill="#dceaf0" stroke="#444" /><path d="M12 12l4 4" stroke="#222" strokeWidth="2.500" />
        </Svg>
        <Caret />
      </button>
      <button aria-label="Display settings" className="ml-[5px] flex items-center gap-[3px]">
        <Svg w={17} h={17}>
          <path d="M1 1.500h15v11H1z" fill="#fff" stroke="#333" /><path d="M3.500 4h10v6h-10z" fill="#9dbbe6" stroke="#2c4c80" /><path d="M6 13v3h5v-3" stroke="#333" />
        </Svg>
        <Caret />
      </button>
      <button aria-label="Grid" className="ml-[5px] flex items-center gap-[3px]">
        <Svg w={16} h={17}>
          <path d="M.5 1h15v15H.5z" fill="#fff" stroke="#444" />
          <path d="M3.500 1v15M6.500 1v15M9.500 1v15M12.500 1v15M0 4h16M0 7h16M0 10h16M0 13h16" stroke="#777" />
        </Svg>
        <Caret />
      </button>
      <button aria-label="Viewports" className="mr-[3px] ml-[5px] flex items-center gap-[3px]">
        <Svg w={16} h={16}>
          <path d="M1 1.500h6v5H1zM9 1.500h6v5H9zM1 9h6v5H1zM9 9h6v5H9z" fill="#a9bfe6" stroke="#2c4470" strokeWidth="1.300" />
        </Svg>
        <Caret />
      </button>
    </div>
  );
}

/* ---------- timeline ---------- */

function Timeline() {
  return (
    <div className="flex h-[50px] shrink-0 items-center border-t border-[#c6c6c6] bg-[#f1f1f1]">
      <div className="flex items-center gap-[11px] pb-px pl-[10px]">
        {[
          ["First", "M1 0h2v16H1zM14 0v16L3 8z"],
          ["Back", "M10 1v14L1 8zM11 4h2v8h-2z"],
          ["Play", "M2 0l12 8-12 8z"],
          ["Forward", "M5 1v14l9-7zM2 4h2v8H2z"],
          ["Last", "M12 0h2v16h-2zM1 0v16l11-8z"],
        ].map(([n, d]) => (
          <button key={n} aria-label={n}><Svg w={14} h={16}><path d={d} fill="#444" /></Svg></button>
        ))}
      </div>
      <div className="flex h-full pt-[9px] pl-[19px]">
        {Array.from({ length: 62 }, (_, i) => (
          <button key={i} aria-label={i ? `Extrude ${i}` : "Sketch"} className="h-[34px] w-6">
            <svg width="24" height="34" viewBox="0 0 24 34" fill="none" className="block">
              <g transform="translate(3 6)">
                {i === 0 ? (
                  <SketchGlyph />
                ) : (
                  <>
                    <path d="M0 13.500h8l4-3.500v2.500L8.500 16H0z" fill="#aaa" />
                    <path d="M0 3h8.500v10H0z" fill="#63aee8" /><path d="M0 3l3-3h9L8.500 3z" fill="#86c7fb" />
                    <path d="M8.500 3L12 0v10l-3.500 3z" fill="#3e8fcc" />
                    <path d="M13.500 1v12M12 2.500h3" stroke="#222" />
                  </>
                )}
              </g>
              <path d={i === 0 ? "M11 25v7h13" : i === 61 ? "M0 31h11v-6" : "M0 31h24M11 31v-6"} stroke="#c4c4c4" strokeWidth="2" />
            </svg>
          </button>
        ))}
        <svg width="12" height="32" viewBox="0 0 12 32" className="-ml-[7px] block">
          <path d="M0 0h12v4l-5 5v23H5V9L0 4z" fill="#606060" />
        </svg>
      </div>
      <button aria-label="Timeline settings" className="mr-[13px] ml-auto pb-px"><Svg w={16} h={16}><GearShape c={8} /></Svg></button>
    </div>
  );
}

/* ---------- dock ---------- */

function D({ children, dot, name }: { children: React.ReactNode; dot?: boolean; name: string }) {
  return (
    <button aria-label={name} className="relative flex h-[52px] w-[44px] shrink-0 justify-center pt-[3px]">
      <svg width="44" height="42" viewBox="-22 -21 44 42" fill="none">{children}</svg>
      {dot && <span className="absolute bottom-[2px] left-[20px] size-1 rounded-full bg-[#ffd3a8]" />}
    </button>
  );
}

function Dock() {
  return (
    <nav className="flex h-[53px] rounded-t-[5px] border-x border-t border-[#5f4630] bg-[#80512f] bg-linear-to-b from-[#7a4d2e] to-[#8a5a33] pr-[4px] pl-[2px] font-['Noto_Sans',sans-serif]">
      <D name="Finder" dot>
        <rect x="-17" y="-16" width="34" height="33" rx="2" fill="#edf2fb" />
        <path d="M-17-16H1C-3-8-3 0-3 3h4c0 5 0 10 1 14h-19z" fill="#1f7ff7" /><path d="M-17-16H1l-4 14-1 5h-13z" fill="#2cb9fb" />
        <path d="M1-16C-3-8-3 0-3 3h4c0 5 0 10 1 14M-8-8v4M8-8v4M-11 6c6 6 16 6 22 0" stroke="#123" strokeWidth="1.500" />
      </D>
      <D name="Launchpad">
        <circle r="17.500" fill="#8e9a9e" stroke="#c9d2d5" />
        <path d="M-17-3a17 17 0 0 1 34 0z" fill="#a9b6ba" />
        <path d="M12-12C4-13-1-9-4-4l-5 1-4 6 6-1 4 5-1 6 6-4 2-6C9 0 12-5 12-12zM-7 5l-4 8 7-5z" fill="#33393c" /><circle cx="4" cy="-4" r="2.300" fill="#9aa5a9" />
      </D>
      <D name="Safari" dot>
        <circle r="18" fill="#e9eef2" /><circle r="16" fill="#1c86ec" /><circle r="11" cy="-2" fill="#2fa5f6" /><circle r="14" stroke="#9bd2ff" strokeDasharray="1 2.500" strokeWidth="2" />
        <path d="M12-11L-3-3l6 6z" fill="#f33" /><path d="M-12 11L-3-3l6 6z" fill="#f4f4f4" />
      </D>
      <D name="Chrome">
        <rect x="-17" y="-17" width="34" height="34" rx="6" fill="#fff" />
        <path d="M-12.100-7A14 14 0 0 1 12.100-7H0a7 7 0 0 0-6 3.500z" fill="#e33b2e" />
        <path d="M12.100-7A14 14 0 0 1 0 14l6-10.500A7 7 0 0 0 0-7z" fill="#fcc934" />
        <path d="M-12.100-7A14 14 0 0 0 0 14L6 3.500a7 7 0 0 1-12 0z" fill="#2a9a4b" />
        <circle r="6.500" fill="#fff" /><circle r="5.200" fill="#3f7df0" />
      </D>
      <D name="Mail">
        <g transform="rotate(-7)">
          <rect x="-13" y="-17" width="26" height="34" fill="#fff" stroke="#fff" strokeWidth="2" strokeDasharray="2 1" />
          <path d="M-11-15h22v30h-22z" fill="#2f7fd2" /><path d="M-11 3h22v12h-22z" fill="#5aa4e4" />
          <path d="M-9-7c4-1 6 3 8 6 4 0 6 3 10 6l-1 4-7-2c-4-1-6-6-10-14z" fill="#4f3826" /><path d="M-7-12L1-2l-3 4z" fill="#8a6a4a" /><circle cx="6" cy="2" r="1.800" fill="#fff" />
        </g>
        <circle cx="11" cy="10" r="8" stroke="#3a3a3a" strokeOpacity=".5" /><circle cx="11" cy="10" r="5" stroke="#3a3a3a" strokeOpacity=".5" />
      </D>
      <D name="Calendar">
        <path d="M-16-12l28-6 5 29-29 6z" fill="#555" />
        <g transform="rotate(-5)">
          <rect x="-14" y="-16" width="27" height="32" fill="#fafafa" /><rect x="-14" y="-16" width="27" height="9" fill="#e5393d" />
          <text x="0" y="-8.500" fontSize="8" fill="#fff" textAnchor="middle">JUN</text>
          <text x="0" y="11" fontSize="18" fill="#222" textAnchor="middle">7</text>
        </g>
      </D>
      <D name="Notes">
        <g transform="rotate(-6)">
          <rect x="-14" y="-17" width="28" height="34" fill="#fbfbf7" /><rect x="-14" y="-17" width="28" height="8" fill="#fbc71d" />
          <path d="M-14-5h28M-14-1h28M-14 3h28M-14 7h28M-14 11h28" stroke="#ddd" />
        </g>
      </D>
      <D name="Maps">
        <g transform="rotate(-7)">
          <rect x="-15" y="-15" width="30" height="31" fill="#f2efe6" /><path d="M-2-15h17v12C6-3 0-8-2-15z" fill="#8ed06a" /><path d="M2-15c2 6 6 9 13 9" stroke="#fff" strokeWidth="3" />
          <path d="M-15 2h30v4h-30z" fill="#ffd24a" /><path d="M-8-15h5V0h-5z" fill="#2c78e4" /><path d="M-15-12l6-3v30h-6z" fill="#f6c4c0" />
        </g>
        <circle cx="-7" cy="4" r="5" fill="#1673e6" /><path d="M-7 0l3 7-3-1.500L-10 7z" fill="#fff" />
        <circle cx="11" cy="8" r="9" fill="#f4f4f4" stroke="#bbb" /><circle cx="11" cy="8" r="6" stroke="#5a8fa8" />
        <text x="11" y="10" fontSize="6" fill="#333" textAnchor="middle">3D</text>
      </D>
      <D name="Photos">
        <circle r="18" fill="#f6f6f6" />
        {["#f7941d", "#c9d52e", "#7bc043", "#3fb59b", "#5aa0e0", "#8a7cd0", "#c86fb5", "#f0524a"].map((c, i) => (
          <ellipse key={c} cy="-9" rx="5" ry="7" fill={c} fillOpacity=".85" transform={`rotate(${i * 45})`} />
        ))}
      </D>
      <D name="App Store">
        <circle r="18" fill="#e8f3ff" /><circle r="16.500" fill="#1788f5" />
        <path d="M2-10L-8 8M-2-10L9 8M-12 4h13M6 4h6" stroke="#fff" strokeWidth="3" strokeLinecap="round" />
      </D>
      <D name="Messages">
        <ellipse cy="-3" cx="0" rx="18" ry="13" fill="#35a3f8" /><path d="M-14 4l-1 11 10-5z" fill="#2b8ef0" />
        <ellipse cx="6" cy="7" rx="11" ry="9" fill="#f5f8fb" /><path d="M12 13l3 5-8-2z" fill="#f5f8fb" />
        <path d="M1 7h.1M6 7h.1M11 7h.1" stroke="#174a80" strokeWidth="3" strokeLinecap="round" />
      </D>
      <D name="iTunes">
        <circle r="18" fill="#a879f0" /><path d="M-18 0a18 18 0 0 1 36 0z" fill="#f0517e" /><circle r="15.500" fill="#f7f4fa" />
        <path d="M-4 8V-8l12-3V6" stroke="#b05ce0" strokeWidth="2.500" /><path d="M-4-7l12-3v-2l-12 3z" fill="#f0517e" stroke="#f0517e" />
        <ellipse cx="-7" cy="8" rx="4" ry="3" fill="#4a8cf0" /><ellipse cx="5" cy="6" rx="4" ry="3" fill="#a05ce0" />
      </D>
      <D name="System Preferences">
        <rect x="-18" y="-16" width="36" height="33" rx="2" fill="#8b979d" />
        <circle r="14" fill="#2b2c2e" /><circle r="12" stroke="#888" strokeDasharray="1.500 1.500" strokeWidth="2" /><circle r="8.500" stroke="#aaa" strokeWidth="2" />
        <path d="M0 0L-4-8M0 0h9M0 0l-4 8" stroke="#bbb" strokeWidth="2.500" /><circle r="3" fill="#777" />
        <circle cx="14" cy="-13" r="8" fill="#f4302f" /><text x="14" y="-9" fontSize="11" fill="#fff" textAnchor="middle">1</text>
      </D>
      <D name="Dictionary">
        <g transform="rotate(-8)">
          <path d="M-13-16h26v33h-26z" fill="#9c2f35" stroke="#6d2025" /><path d="M-12 16h26v2h-26z" fill="#ddd" />
          <text y="5" fontSize="15" fill="#f7e9e9" textAnchor="middle" fontFamily="Liberation Serif">Aa</text>
          <text y="-11" fontSize="4" fill="#e0a9a9" textAnchor="middle" fontFamily="Liberation Serif">Dictionary</text>
        </g>
      </D>
      <D name="Illustrator" dot>
        <rect x="-18.500" y="-18" width="37" height="36" fill="#2c1600" stroke="#f57f0b" strokeWidth="2" /><text y="7" fontSize="21" fontWeight="600" fill="#ff8a1c" textAnchor="middle">Ai</text>
      </D>
      <D name="Photoshop" dot>
        <rect x="-18.500" y="-18" width="37" height="36" fill="#04202a" stroke="#20c2ee" strokeWidth="2" /><text y="7" fontSize="19" fontWeight="600" fill="#2ccdf8" textAnchor="middle">Ps</text>
      </D>
      <D name="Fusion 360" dot>
        <rect x="-21" y="-20" width="42" height="41" fill="#fbe3cf" /><path d="M-21 4L0-4l21 8v17h-42z" fill="#f9d0b0" /><path d="M-21-20h42v8z" fill="#fff3e8" />
        <path d="M-8-13l4-3H9v6L0-7v4h8v5l-8 3v6l-8-1z" fill="#a9571a" /><path d="M-8-13l4-3H9l-10 4-1 24-6-1z" fill="#e58a32" />
        <text x="8" y="18" fontSize="8" fontWeight="600" fill="#ee6a0f" textAnchor="middle">360</text>
      </D>
      <span className="mx-[9px] mt-[7px] h-10 w-px bg-[#c29a78]" />
      <D name="Documents">
        <path d="M-12-18H6l7 8v28h-25z" fill="#fafafa" /><path d="M5-18l8 9-7 1z" fill="#ddd" />
        <path d="M-8-12h10M-8-8h12M-8-5h9M-8 0h16M-8 3h16M-8 7h16M-8 11h12" stroke="#aab4cc" /><path d="M-8-9h12" stroke="#456a9d" strokeWidth="2" />
        <path d="M-12.500-15v32" stroke="#222" strokeWidth="3" strokeDasharray="1.500 1.500" />
      </D>
      <D name="Trash">
        <path d="M-14-13h28l-4 29c-4 3-16 3-20 0z" fill="#4d4f52" /><path d="M-10-10l3 26M-3-9l1 27M5-9L4 17M11-10L8 15" stroke="#717478" />
        <ellipse cy="-13" rx="14" ry="4" fill="#2e3033" stroke="#8a8c8f" /><path d="M-10-14l4-4 4 3 4-3 5 2 4 2-6 3h-11z" fill="#eee" /><path d="M-5-15l3-2 2 3zM4-14l3-2 1 3z" fill="#49a69c" />
      </D>
    </nav>
  );
}

/* ---------- page ---------- */

export default function App() {
  return (
    <div className="flex h-screen min-h-[600px] flex-col overflow-hidden bg-[#1d232b]">
      <MenuBar />
      <main className="mt-px mr-[2px] flex min-h-0 flex-1 flex-col overflow-hidden rounded-[5px] bg-[#cbcbcb]">
        <TitleBar />
        <TabStrip />
        <Ribbon />
        <div className="flex h-8 shrink-0 items-center bg-[#ffc36d] font-['Liberation_Sans',sans-serif] text-[13px] font-bold text-white">
          <p className="flex-1 text-center">
            An important product update (v 2.0.10244) addressing recent data issues is now available. Please restart Fusion 360 ASAP and follow the steps outlined in this{" "}
            <a href="#support" className="underline">Support Article</a>.
          </p>
          <button aria-label="Dismiss" className="mr-[16px]">
            <Svg w={10} h={10}><path d="M1 1l8 8M9 1L1 9" stroke="#fff" strokeWidth="2" /></Svg>
          </button>
        </div>
        <section className="relative min-h-0 flex-1 overflow-hidden bg-white">
          <Model />
          <Browser />
          <ViewCube />
          <div className="absolute bottom-[4px] left-[4px] font-['Noto_Sans',sans-serif]">
            <PanelHeader title="COMMENTS" plus />
          </div>
          <NavBar />
        </section>
        <Timeline />
      </main>
      <footer className="mt-[2px] flex h-[53px] shrink-0 justify-center bg-linear-to-r from-[#b87b49] via-[#c08448] to-[#dba768]">
        <div className="flex h-full w-full justify-center bg-linear-to-b from-black/45 via-black/10 to-transparent">
          <Dock />
        </div>
      </footer>
    </div>
  );
}
